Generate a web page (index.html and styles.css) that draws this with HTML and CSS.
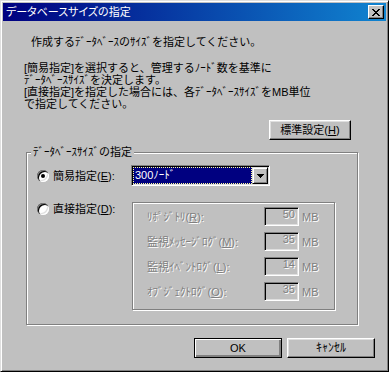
FILE: index.html
```html
<!DOCTYPE html>
<html lang="ja">
<head>
  <meta charset="UTF-8">
  <title>データベースサイズの指定</title>
  <link rel="stylesheet" href="styles.css">
</head>
<body>

  <div class="window">
    <!-- Title bar -->
    <div class="titlebar">
      <span class="title">データベースサイズの指定</span>
      <button class="close-btn" aria-label="閉じる">
        <svg width="8" height="7" viewBox="0 0 8 7" shape-rendering="crispEdges">
          <path d="M0 0h2v1h-2z M6 0h2v1h-2z M1 1h2v1h-2z M5 1h2v1h-2z M2 2h4v1h-4z M3 3h2v1h-2z M2 4h4v1h-4z M1 5h2v1h-2z M5 5h2v1h-2z M0 6h2v1h-2z M6 6h2v1h-2z" fill="#000"/>
        </svg>
      </button>
    </div>

    <div class="content">
      <p class="lead">作成するﾃﾞｰﾀﾍﾞｰｽのｻｲｽﾞを指定してください。</p>
      <p class="note">[簡易指定]を選択すると、管理するﾉｰﾄﾞ数を基準に<br>ﾃﾞｰﾀﾍﾞｰｽｻｲｽﾞを決定します。<br>[直接指定]を指定した場合には、各ﾃﾞｰﾀﾍﾞｰｽｻｲｽﾞをMB単位<br>で指定してください。</p>

      <div class="defaults-row">
        <button class="btn btn-defaults">標準設定(<u>H</u>)</button>
      </div>

      <fieldset class="group">
        <legend>ﾃﾞｰﾀﾍﾞｰｽｻｲｽﾞの指定</legend>

        <div class="opt-row">
          <label class="radio"><span class="radio-dot checked"></span><span>簡易指定(<u>E</u>):</span></label>
          <div class="combo">
            <div class="combo-value">300ﾉｰﾄﾞ</div>
            <div class="combo-btn">
              <svg width="7" height="4" viewBox="0 0 7 4" shape-rendering="crispEdges">
                <path d="M0 0h7v1h-7z M1 1h5v1h-5z M2 2h3v1h-3z M3 3h1v1h-1z" fill="#000"/>
              </svg>
            </div>
          </div>
        </div>

        <div class="opt-row opt-direct">
          <label class="radio"><span class="radio-dot"></span><span>直接指定(<u>D</u>):</span></label>
          <div class="sizes">
            <div class="size-row">
              <span class="size-label">ﾘﾎﾟｼﾞﾄﾘ(<u>R</u>):</span>
              <span class="size-input">50</span>
              <span class="size-unit">MB</span>
            </div>
            <div class="size-row">
              <span class="size-label">監視ﾒｯｾｰｼﾞﾛｸﾞ(<u>M</u>):</span>
              <span class="size-input">35</span>
              <span class="size-unit">MB</span>
            </div>
            <div class="size-row">
              <span class="size-label">監視ｲﾍﾞﾝﾄﾛｸﾞ(<u>L</u>):</span>
              <span class="size-input">14</span>
              <span class="size-unit">MB</span>
            </div>
            <div class="size-row">
              <span class="size-label">ｵﾌﾞｼﾞｪｸﾄﾛｸﾞ(<u>O</u>):</span>
              <span class="size-input">35</span>
              <span class="size-unit">MB</span>
            </div>
          </div>
        </div>
      </fieldset>

      <div class="actions">
        <button class="btn btn-default">OK</button>
        <button class="btn btn-cancel">ｷｬﾝｾﾙ</button>
      </div>
    </div>
  </div>

</body>
</html>
```

FILE: styles.css
```css
* { box-sizing: border-box; }

body {
  margin: 0;
  background: #c0c0c0;
  font-family: "Liberation Sans", "Noto Sans CJK JP", sans-serif;
  font-size: 11px;
  line-height: 12px;
  color: #000;
  text-autospace: no-autospace;
}

/* Window frame */
.window {
  width: 389px;
  height: 372px;
  padding: 2px;
  background: #c0c0c0;
  border: 1px solid;
  border-color: #dfdfdf #000 #000 #dfdfdf;
  box-shadow: inset 1px 1px #fff, inset -1px -1px #808080;
}

.titlebar {
  display: flex;
  align-items: center;
  justify-content: space-between;
  height: 18px;
  padding-left: 3px;
  background: linear-gradient(to right, #000080, #1084d0);
}

.title {
  color: #fff;
  font-size: 11px;
  font-feature-settings: "palt";
}

.close-btn {
  display: flex;
  align-items: center;
  justify-content: center;
  width: 16px;
  height: 14px;
  margin-right: 2px;
  padding: 0;
  background: #c0c0c0;
  border: 1px solid;
  border-color: #fff #000 #000 #fff;
  box-shadow: inset -1px -1px #808080;
}

/* Texts */
.lead { margin: 15px 0 0 28px; }
.note { margin: 14px 0 0 21px; }

/* Buttons */
.btn {
  height: 20px;
  padding: 0;
  font-family: inherit;
  font-size: 11px;
  line-height: 12px;
  color: #000;
  background: #c0c0c0;
  border: 1px solid;
  border-color: #fff #000 #000 #fff;
  box-shadow: inset -1px -1px #808080, inset 1px 1px #dfdfdf;
}

.btn-default {
  border-color: #000;
  box-shadow: inset 1px 1px #fff, inset -1px -1px #808080, inset -2px -2px #808080;
}

.btn-cancel { font-size: 12px; }

.defaults-row {
  display: flex;
  justify-content: flex-end;
  margin-top: 10px;
  padding-right: 35px;
}

.btn-defaults { width: 82px; }

/* Group box */
.group {
  width: 332px;
  margin: 6px 0 0 23px;
  padding: 7px 0 14px 4px;
  border: 1px solid #808080;
  box-shadow: inset 1px 1px #fff, 1px 1px #fff;
}

.group legend {
  padding: 0 2px;
  background: #c0c0c0;
  line-height: 12px;
}

.opt-row {
  display: flex;
  align-items: center;
  padding-left: 6px;
}

.opt-direct {
  align-items: flex-start;
  margin-top: 16px;
}

.radio {
  display: flex;
  align-items: center;
  gap: 4px;
  width: 94px;
}

.opt-direct .radio { margin-top: 1px; }

.radio-dot {
  position: relative;
  width: 12px;
  height: 12px;
  border-radius: 50%;
  background: #fff;
  box-shadow: inset 1px 1px #808080, inset 2px 2px #000, inset -1px -1px #fff, inset -2px -2px #dfdfdf;
}

.radio-dot.checked::after {
  content: "";
  position: absolute;
  left: 4px;
  top: 4px;
  width: 4px;
  height: 4px;
  border-radius: 50%;
  background: #000;
}

/* Combo box */
.combo {
  display: flex;
  width: 139px;
  height: 21px;
  background: #fff;
  border: 1px solid;
  border-color: #808080 #fff #fff #808080;
  box-shadow: inset 1px 1px #000, inset -1px -1px #dfdfdf;
  padding: 1px;
}

.combo-value {
  flex: 1;
  padding-left: 1px;
  color: #fff;
  background: #000080;
  border: 1px dotted #ffff99;
  line-height: 15px;
}

.combo-btn {
  display: flex;
  align-items: center;
  justify-content: center;
  width: 16px;
  background: #c0c0c0;
  border: 1px solid;
  border-color: #dfdfdf #000 #000 #dfdfdf;
  box-shadow: inset 1px 1px #fff, inset -1px -1px #808080;
}

/* Direct sizes */
.sizes {
  display: flex;
  flex-direction: column;
  gap: 6px;
  width: 203px;
  height: 108px;
  margin-left: 1px;
  padding: 4px 0 0 14px;
  border: 1px solid #808080;
  box-shadow: inset 1px 1px #fff, 1px 1px #fff;
}

.size-row {
  display: flex;
  align-items: center;
  height: 19px;
  color: #808080;
  text-shadow: 1px 1px #fff;
}

.size-label { width: 117px; }

.size-input {
  width: 35px;
  height: 19px;
  padding: 1px 3px 0;
  text-align: right;
  line-height: 11px;
  border: 1px solid;
  border-color: #808080 #fff #fff #808080;
  box-shadow: inset 1px 1px #000, inset -1px -1px #dfdfdf;
}

.size-unit { margin-left: 3px; }

/* Dialog buttons */
.actions {
  display: flex;
  justify-content: flex-end;
  gap: 5px;
  margin-top: 13px;
  padding-right: 11px;
}

.actions .btn { width: 88px; }
```
